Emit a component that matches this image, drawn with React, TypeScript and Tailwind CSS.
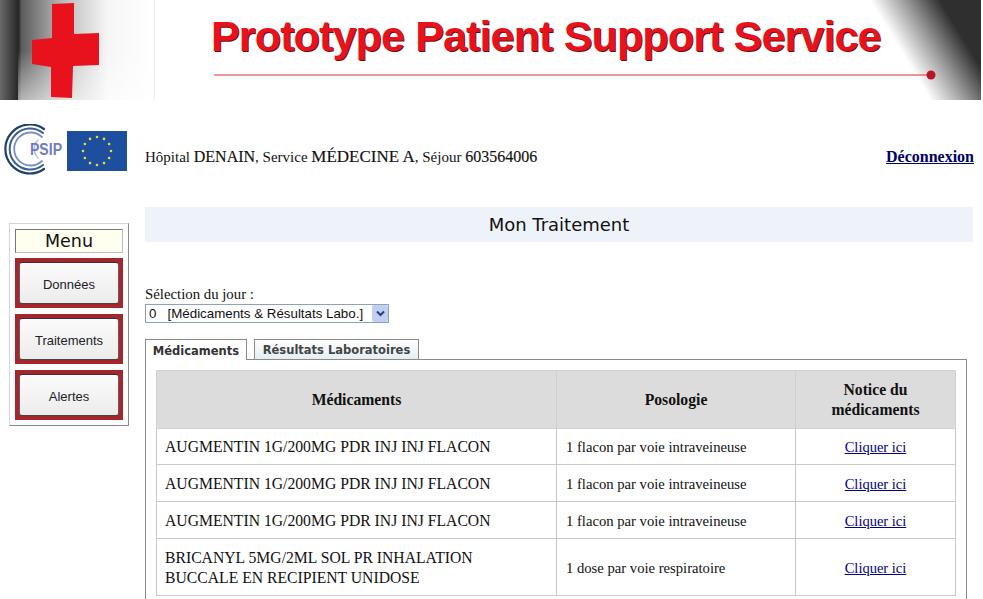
const serif = "font-['Liberation_Serif','Times_New_Roman',serif]";

const rows = [
  { name: ["AUGMENTIN 1G/200MG PDR INJ INJ FLACON"], dose: "1 flacon par voie intraveineuse", h: "h-[36px]" },
  { name: ["AUGMENTIN 1G/200MG PDR INJ INJ FLACON"], dose: "1 flacon par voie intraveineuse", h: "h-[37px]" },
  { name: ["AUGMENTIN 1G/200MG PDR INJ INJ FLACON"], dose: "1 flacon par voie intraveineuse", h: "h-[37px]" },
  { name: ["BRICANYL 5MG/2ML SOL PR INHALATION", "BUCCALE EN RECIPIENT UNIDOSE"], dose: "1 dose par voie respiratoire", h: "h-[57px]" },
];

function Banner() {
  return (
    <div className="relative h-[100px] w-[981px] overflow-hidden bg-white">
      <svg width="981" height="100" className="absolute inset-0">
        <defs>
          <linearGradient id="leftEdge" x1="0" x2="1" y1="0" y2="0">
            <stop offset="0" stopColor="#6a6a6a" />
            <stop offset="0.12" stopColor="#262626" />
            <stop offset="0.14" stopColor="#5c5c5c" />
            <stop offset="0.4" stopColor="#b9b9b9" />
            <stop offset="0.7" stopColor="#f6f6f6" />
            <stop offset="1" stopColor="#ffffff" />
          </linearGradient>
          <linearGradient id="fadeDown" x1="0" x2="0" y1="0" y2="1">
            <stop offset="0" stopColor="#ffffff" stopOpacity="0" />
            <stop offset="1" stopColor="#ffffff" stopOpacity="0.55" />
          </linearGradient>
          <linearGradient id="rightEdge" x1="870" y1="0" x2="921" y2="-31" gradientUnits="userSpaceOnUse">
            <stop offset="0" stopColor="#ffffff" />
            <stop offset="0.5" stopColor="#9a9a9a" />
            <stop offset="1" stopColor="#2f2f2f" />
          </linearGradient>
        </defs>
        <rect x="0" y="0" width="154" height="100" fill="url(#leftEdge)" />
        <rect x="18" y="50" width="136" height="50" fill="url(#fadeDown)" />
        <rect x="154" y="0" width="1" height="100" fill="#ececec" />
        <path d="M52 4 L74 3 L74 34 L99 33 L99 65 L73 66 L72 98 L51 97 L51 67 L32 64 L32 40 L52 38 Z" fill="#e8121c" />
        <rect x="850" y="0" width="131" height="100" fill="url(#rightEdge)" />
        <line x1="214" y1="75" x2="928" y2="75" stroke="#d2323c" strokeWidth="1" />
        <circle cx="931" cy="75" r="4.500" fill="#bb1528" />
      </svg>
      <div className="absolute left-[211px] top-[12px] whitespace-nowrap font-['Liberation_Sans',Arial,sans-serif] text-[43px] leading-[48px] font-bold tracking-[-0.85px] text-[#e8121c] [text-shadow:1px_1px_0_#6a0c10]">
        Prototype Patient Support Service
      </div>
    </div>
  );
}

function PsipLogo() {
  return (
    <svg width="67" height="52" viewBox="0 0 67 52" className="shrink-0">
      <g fill="none" strokeLinecap="round">
        <path d="M44 5 A24.500 24.500 0 1 0 44 45" stroke="#1d3f6e" strokeWidth="2.200" />
        <path d="M43 9 A20.500 20.500 0 1 0 43 41" stroke="#3e5f92" strokeWidth="2" />
        <path d="M42 13 A16.500 16.500 0 1 0 42 37" stroke="#7d8fc0" strokeWidth="1.800" />
        <path d="M38 16 A13 13 0 0 0 38 34" stroke="#b9c2e2" strokeWidth="1.600" />
      </g>
      <text x="30" y="31" fontFamily="Liberation Sans, Arial, sans-serif" fontWeight="700" fontSize="16" textLength="32" lengthAdjust="spacingAndGlyphs" fill="#6f7dbd">
        PSIP
      </text>
    </svg>
  );
}

function EuFlag() {
  const stars = Array.from({ length: 12 }, (_, i) => {
    const a = (i * Math.PI) / 6;
    return { x: 30 + 14 * Math.sin(a), y: 20 - 14 * Math.cos(a) };
  });
  return (
    <svg width="60" height="40" viewBox="0 0 60 40" className="shrink-0">
      <rect width="60" height="40" fill="#1d4f9e" />
      {stars.map((s, i) => (
        <circle key={i} cx={s.x} cy={s.y} r="1.3" fill="#e6dc3a" />
      ))}
    </svg>
  );
}

function MenuButton({ label }: { label: string }) {
  return (
    <div className="h-[50px] border-[4px] border-[#a5272d] bg-[#a5272d]">
      <div className="flex h-full items-center justify-center rounded-[3px] border border-t-[#3a3040] border-r-[#6d5a60] border-b-[#4a4048] border-l-[#6d5a60] bg-gradient-to-b from-[#fbfbfb] to-[#ececec] pt-[3px] font-['Liberation_Sans',Arial,sans-serif] text-[13px] text-[#222]">
        {label}
      </div>
    </div>
  );
}

export default function App() {
  return (
    <div className={`h-[599px] w-[983px] overflow-hidden bg-white text-[#111] ${serif}`}>
      <Banner />

      <div className="flex h-[107px] w-[974px] items-start pt-[24px]">
        <PsipLogo />
        <div className="mt-[7px]">
          <EuFlag />
        </div>
        <div className="ml-[18px] mt-[24px] flex w-[829px] items-baseline justify-between text-[15px] leading-[18px]">
          <span>
            Hôpital <span className="text-[16px] [-webkit-text-stroke:0.15px_#111]">DENAIN</span>, Service{" "}
            <span className="text-[17px] [-webkit-text-stroke:0.15px_#111]">MÉDECINE A</span>, Séjour{" "}
            <span className="text-[16px] [-webkit-text-stroke:0.15px_#111]">603564006</span>
          </span>
          <a href="#" className="text-[16px] font-bold text-[#000066] underline">
            Déconnexion
          </a>
        </div>
      </div>

      <div className="flex items-start">
        <aside className="ml-[9px] mt-[16px] flex h-[203px] w-[120px] flex-col gap-[6px] border border-[#d4d4d4] border-r-[#8a8a8a] border-b-[#8a8a8a] px-[5px] pt-[5px]">
          <div className="mb-[-1px] h-[24px] border border-[#bdbdbd] border-t-[#777] border-l-[#777] bg-[#fffff0] text-center font-['DejaVu_Sans',Verdana,sans-serif] text-[17.500px] leading-[22px] text-[#111]">
            Menu
          </div>
          <MenuButton label="Données" />
          <MenuButton label="Traitements" />
          <MenuButton label="Alertes" />
        </aside>

        <main className="ml-[16px] w-[828px]">
          <h1 className="h-[35px] bg-[#eef3fa] text-center font-['DejaVu_Sans',Verdana,sans-serif] text-[18px] leading-[36px] font-normal text-[#111]">
            Mon Traitement
          </h1>

          <div className="mt-[44px] text-[14.800px] leading-[17px]">Sélection du jour :</div>
          <div className="mt-[1px] flex h-[19px] w-[244px] items-center justify-between border border-[#8fa3b8] font-['Liberation_Sans',Arial,sans-serif] text-[13.330px] text-[#111]">
            <span className="pl-[3px] whitespace-pre">0   [Médicaments &amp; Résultats Labo.]</span>
            <span className="flex h-[17px] w-[16px] items-center justify-center rounded-[2px] bg-[#c0cff2]">
              <svg width="9" height="7" viewBox="0 0 9 7">
                <path d="M1 1.500 L4.500 5 L8 1.500" fill="none" stroke="#27407a" strokeWidth="2" />
              </svg>
            </span>
          </div>

          <div className="mt-[16px] flex w-[822px] items-end border-b border-[#8a8a8a] font-['DejaVu_Sans',Verdana,sans-serif] text-[11.500px] font-bold">
            <div className="relative -mb-px h-[21px] w-[102px] border border-b-0 border-[#8a8a8a] bg-white pt-[1px] text-center leading-[21px] text-[#333]">
              Médicaments
            </div>
            <div className="ml-[7px] h-[20px] w-[165px] border border-b-0 border-[#8a8a8a] bg-gradient-to-b from-white to-[#e4eef2] pt-[1px] text-center leading-[18px] text-[#444]">
              Résultats Laboratoires
            </div>
          </div>

          <div className="h-[300px] w-[822px] border-x border-[#8a8a8a] px-[10px] pt-[10px]">
            <table className="w-[800px] table-fixed border-collapse text-[15.700px]">
              <thead>
                <tr className="h-[58px] bg-[#dcdcdc] text-[15.700px]">
                  <th className="w-[400px] border border-[#d0d0d0] font-bold">Médicaments</th>
                  <th className="w-[239px] border border-[#d0d0d0] font-bold">Posologie</th>
                  <th className="border border-[#d0d0d0] pt-[1px] leading-[20px] font-bold">
                    Notice du
                    <br />
                    médicaments
                  </th>
                </tr>
              </thead>
              <tbody>
                {rows.map((r, i) => (
                  <tr key={i} className={r.h}>
                    <td className="border border-[#c8c8c8] pt-[1px] pl-[8px] leading-[20px]">
                      {r.name.map((line) => (
                        <div key={line}>{line}</div>
                      ))}
                    </td>
                    <td className="border border-[#c8c8c8] pt-[3px] pl-[9px] text-[14.650px]">{r.dose}</td>
                    <td className="border border-[#c8c8c8] pt-[3px] text-center text-[14.500px]">
                      <a href="#" className="text-[#000080] underline">
                        Cliquer ici
                      </a>
                    </td>
                  </tr>
                ))}
              </tbody>
            </table>
          </div>
        </main>
      </div>
    </div>
  );
}
